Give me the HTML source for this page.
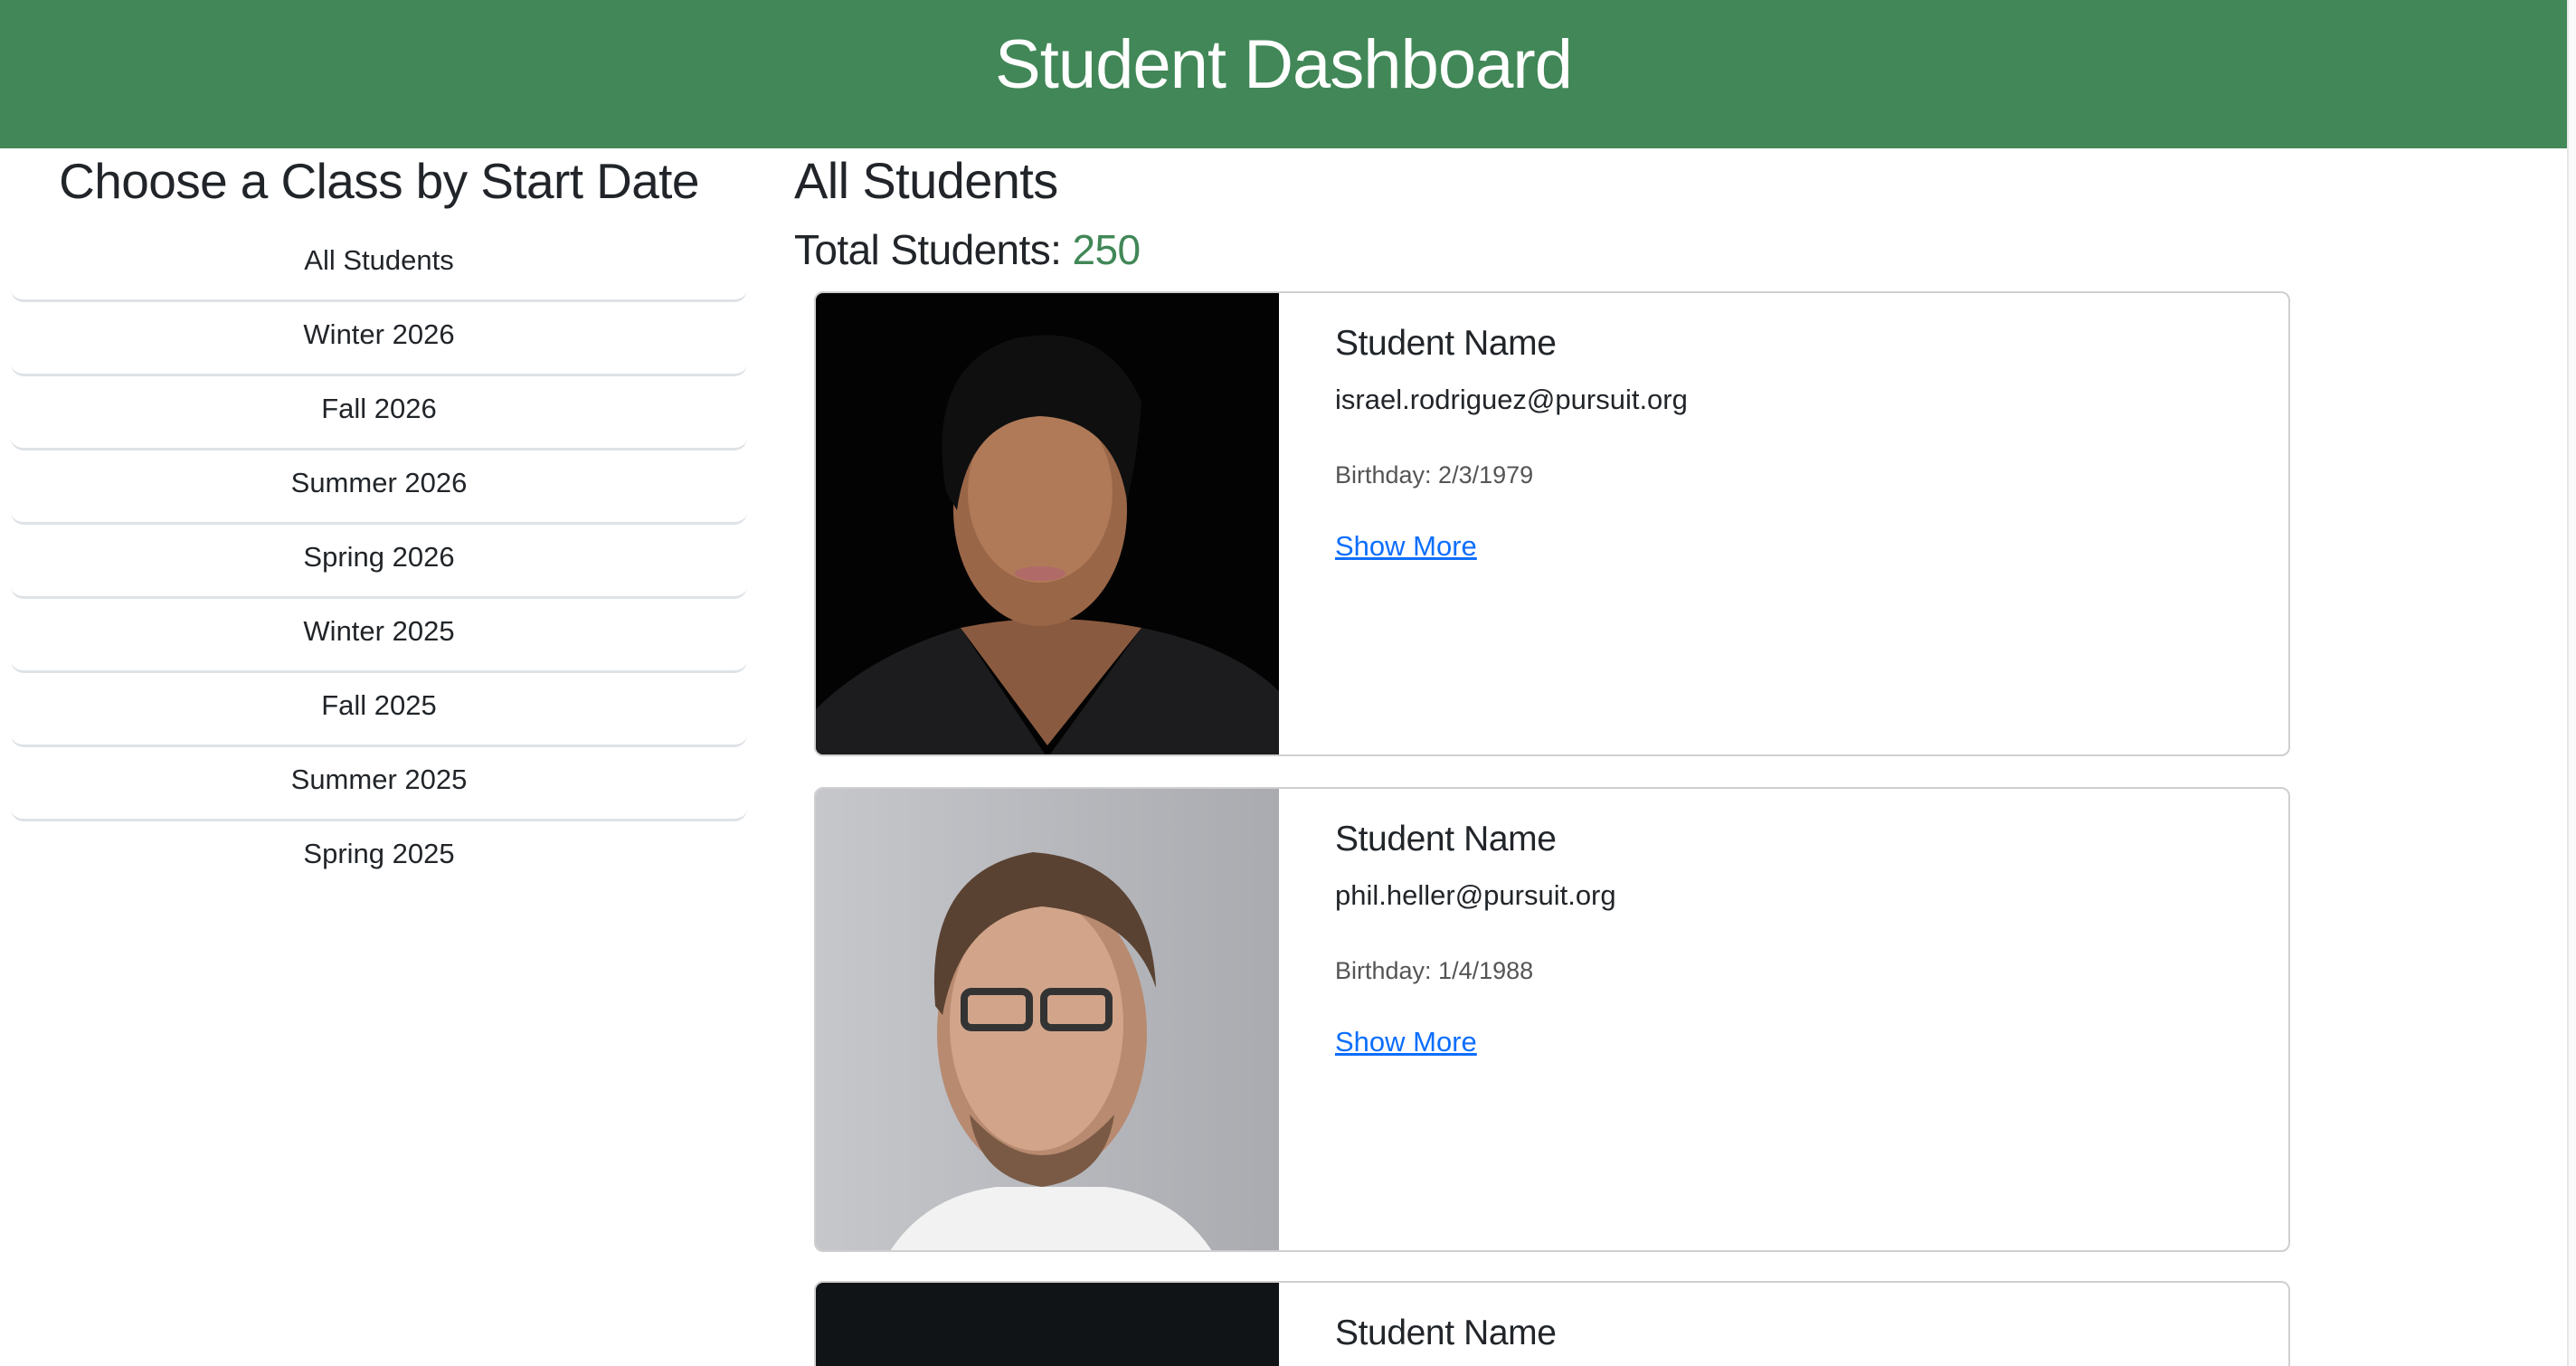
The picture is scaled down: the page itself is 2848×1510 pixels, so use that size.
<!DOCTYPE html>
<html><head><meta charset="utf-8">
<style>
html{zoom:2;overflow:hidden}
*{box-sizing:border-box;margin:0;padding:0}
body{width:1424px;height:755px;overflow:hidden;background:#fff;font-family:"Liberation Sans",Arial,sans-serif;color:#212529}
#wrap{position:relative;width:1424px;height:755px;overflow:hidden}
.sb{position:absolute;left:1419px;top:0;width:5px;height:755px;background:#fafafa;border-left:1px solid #e6e6e6}
header{position:absolute;left:0;top:0;width:1419px;height:82px;background:#418757;color:#fff;text-align:center}
header h1{font-size:38px;font-weight:500;line-height:72px;letter-spacing:-0.5px}
.left{position:absolute;left:6px;top:82px;width:407px}
.left h2{font-size:27.5px;font-weight:500;text-align:center;line-height:36px;height:44px;letter-spacing:-0.3px}
.item{height:41px;line-height:36px;text-align:center;font-size:15.5px;border-bottom:1.5px solid #dee2e6;border-radius:0 0 7px 7px}
.right{position:absolute;left:439px;top:82px}
.right h2{font-size:28px;font-weight:500;line-height:36px;position:absolute;top:0;white-space:nowrap;letter-spacing:-0.3px}
.right h4{font-size:23px;font-weight:500;position:absolute;top:42px;white-space:nowrap;line-height:28px;letter-spacing:-0.3px}
.right h4 span{color:#418757}
.card{position:absolute;left:450px;width:816px;height:257px;border:1px solid #cfcfcf;border-radius:5px;overflow:hidden;background:#fff}
.card svg{position:absolute;left:0;top:0;width:256px;height:257px}
.card .b{position:absolute;left:287px;top:0}
.card h5{position:absolute;top:17px;font-size:19.5px;font-weight:500;white-space:nowrap;letter-spacing:-0.2px}
.card .e{position:absolute;top:50px;font-size:15.5px;white-space:nowrap}
.card .d{position:absolute;top:93px;font-size:13.5px;color:#555;white-space:nowrap}
.card a{position:absolute;top:131px;font-size:15.5px;color:#0d6efd;white-space:nowrap;text-decoration:underline}
</style></head><body><div id="wrap">
<header><h1>Student Dashboard</h1></header>
<div class="sb"></div>
<div class="left">
<h2>Choose a Class by Start Date</h2>
<div class="item">All Students</div>
<div class="item">Winter 2026</div>
<div class="item">Fall 2026</div>
<div class="item">Summer 2026</div>
<div class="item">Spring 2026</div>
<div class="item">Winter 2025</div>
<div class="item">Fall 2025</div>
<div class="item">Summer 2025</div>
<div class="item" style="border:none">Spring 2025</div>
</div>
<div class="right">
<h2>All Students</h2>
<h4>Total Students: <span>250</span></h4>
</div>

<div class="card" style="top:161px">
<svg viewBox="0 0 256 257"><rect width="256" height="257" fill="#030303"/>
<path d="M0 257 L0 230 Q30 200 80 185 L128 257 Z M256 257 L256 220 Q230 195 180 185 L128 257 Z" fill="#1c1c1e"/>
<path d="M80 185 Q128 175 180 185 L128 250 Z" fill="#8a5a40"/>
<ellipse cx="124" cy="120" rx="48" ry="64" fill="#9a6648"/>
<ellipse cx="124" cy="110" rx="40" ry="50" fill="#b07a58"/>
<path d="M72 110 Q60 40 110 25 Q160 15 180 60 Q178 90 172 115 Q165 70 124 68 Q85 70 78 120 Z" fill="#0f0f10"/>
<ellipse cx="124" cy="155" rx="14" ry="4" fill="#b06a68"/>
</svg>
<div class="b"><h5>Student Name</h5><div class="e">israel.rodriguez@pursuit.org</div><div class="d">Birthday: 2/3/1979</div><a>Show More</a></div>
</div>

<div class="card" style="top:435px">
<svg viewBox="0 0 256 257"><defs><linearGradient id="g" x1="0" x2="1"><stop offset="0" stop-color="#c6c7cb"/><stop offset="1" stop-color="#a9abb0"/></linearGradient></defs>
<rect width="256" height="257" fill="url(#g)"/>
<path d="M40 257 Q60 225 100 220 L160 220 Q200 225 220 257 Z" fill="#f2f2f2"/>
<ellipse cx="125" cy="135" rx="58" ry="80" fill="#b88a70"/>
<ellipse cx="122" cy="130" rx="48" ry="70" fill="#d2a58a"/>
<path d="M66 120 Q60 45 120 35 Q185 40 188 110 Q175 70 125 65 Q80 70 70 125 Z" fill="#5a4232"/>
<rect x="82" y="112" width="36" height="20" rx="4" fill="none" stroke="#333" stroke-width="4"/>
<rect x="126" y="112" width="36" height="20" rx="4" fill="none" stroke="#333" stroke-width="4"/>
<path d="M85 180 Q125 225 165 180 Q160 215 125 220 Q90 215 85 180Z" fill="#7a5a45"/>
</svg>
<div class="b"><h5>Student Name</h5><div class="e">phil.heller@pursuit.org</div><div class="d">Birthday: 1/4/1988</div><a>Show More</a></div>
</div>

<div class="card" style="top:708px">
<svg viewBox="0 0 256 257"><rect width="256" height="257" fill="#111416"/></svg>
<div class="b"><h5>Student Name</h5></div>
</div>
</div></body></html>
